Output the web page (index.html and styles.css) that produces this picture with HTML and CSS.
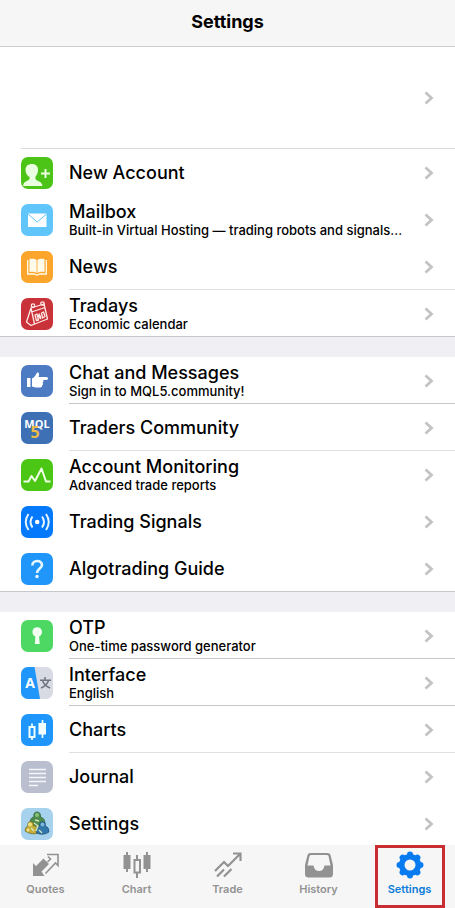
FILE: index.html
```
<!DOCTYPE html>
<html lang="en">
<head>
    <meta charset="UTF-8">
    <meta name="viewport" content="width=device-width, initial-scale=1.0">
    <title>Settings</title>
    <link rel="stylesheet" href="styles.css">
</head>
<body>
    <svg class="defs" width="0" height="0">
        <symbol id="arrow" viewBox="0 0 10 14">
            <path d="M1.5 1.5 L7.5 7 L1.5 12.5" fill="none" stroke="#c3c3c5" stroke-width="2.8"/>
        </symbol>
    </svg>

    <header class="header">
        <h1>Settings</h1>
    </header>

    <main class="content">
        <a class="account" href="#" aria-label="Account">
            <svg class="arrow"><use href="#arrow"/></svg>
        </a>

        <ul class="group">
            <li><a class="row" href="#">
                <svg class="icon" viewBox="0 0 32 32">
                    <rect width="32" height="32" fill="#4cc417"/>
                    <path d="M11 7 C15 7 17 9.500 17 13 C17 16 16 18 14.500 19.500 L14.500 22 C15 24 21 24 21.500 29 L2 29 C2.500 24 7.500 24 8.500 22 L8.500 20 C6 18.500 4.500 16 4.500 13 C4.500 9 7 7 11 7Z" fill="#e9ffe0"/>
                    <path d="M24.500 12 V21 M20 16.500 H29" stroke="#e9ffe0" stroke-width="2"/>
                </svg>
                <span class="text"><span class="title">New Account</span></span>
                <svg class="arrow"><use href="#arrow"/></svg>
            </a></li>
            <li><a class="row" href="#">
                <svg class="icon" viewBox="0 0 32 32">
                    <rect width="32" height="32" fill="#5fc5fa"/>
                    <rect x="7" y="9.500" width="18.500" height="13.500" fill="#fff"/>
                    <path d="M7 10 L16.200 18 L25.500 10" fill="none" stroke="#5fc5fa" stroke-width="1"/>
                </svg>
                <span class="text">
                    <span class="title">Mailbox</span>
                    <span class="sub">Built-in Virtual Hosting — trading robots and signals...</span>
                </span>
                <svg class="arrow"><use href="#arrow"/></svg>
            </a></li>
            <li><a class="row" href="#">
                <svg class="icon" viewBox="0 0 32 32">
                    <rect width="32" height="32" fill="#fca52c"/>
                    <path d="M8.500 8 C11 7.500 14 7.500 15.600 9 V22 C13 20.700 11 20.700 8.500 21Z M23.500 8 C21 7.500 18 7.500 16.400 9 V22 C19 20.700 21 20.700 23.500 21Z" fill="#fffbea"/>
                    <path d="M6.700 9 V23 H13.500 Q16 25 18.500 23 H25.300 V9" fill="none" stroke="#fffbea" stroke-width="1.300"/>
                </svg>
                <span class="text line"><span class="title">News</span></span>
                <svg class="arrow"><use href="#arrow"/></svg>
            </a></li>
            <li><a class="row" href="#">
                <svg class="icon" viewBox="0 0 32 32">
                    <rect width="32" height="32" fill="#c93238"/>
                    <g fill="none" stroke="#ffe9e6" stroke-width="1.300" stroke-linejoin="round">
                        <path d="M10 10 L23 6 L26.500 21 L10 27.500 L5.500 24 L10 10 L13.500 26 M10 10 L5.500 24 M10.500 14 L24 9.500 M10 27.500 L13.500 26"/>
                        <circle cx="12" cy="7.500" r="1.700"/>
                        <circle cx="21.500" cy="5.500" r="1.700"/>
                        <path d="M14 17 L16 16 L17.500 22 L15.500 22.500Z M18 15.500 L19.500 19 L19 21 M22.500 14 L20.500 15 L21.500 20 L24 18.500Z M17 17 L20 21"/>
                    </g>
                </svg>
                <span class="text">
                    <span class="title">Tradays</span>
                    <span class="sub">Economic calendar</span>
                </span>
                <svg class="arrow"><use href="#arrow"/></svg>
            </a></li>
        </ul>

        <ul class="group">
            <li><a class="row" href="#">
                <svg class="icon" viewBox="0 0 32 32">
                    <rect width="32" height="32" fill="#4d7bc3"/>
                    <path d="M6 13 H9.500 V22 H6Z M11 13.500 C13.500 12.500 15 10 16 7.500 C18.500 7 18.500 10 17.500 12 H25.500 C27.500 12 27.500 15 25.500 15 H21.800 C23 15.500 22.500 17.500 21.500 17.700 C22.500 18.500 22 20 21 20.200 C21.500 21.500 20.500 22.500 19 22.500 H14.500 C13 22.500 12.500 21.700 11 21.500Z" fill="#fff"/>
                </svg>
                <span class="text line dark">
                    <span class="title">Chat and Messages</span>
                    <span class="sub">Sign in to MQL5.community!</span>
                </span>
                <svg class="arrow"><use href="#arrow"/></svg>
            </a></li>
            <li><a class="row" href="#">
                <svg class="icon" viewBox="0 0 32 32">
                    <rect width="32" height="32" fill="#3d70b5"/>
                    <text class="mql" x="16" y="16">MQL</text>
                    <text class="five" x="14" y="26">5</text>
                </svg>
                <span class="text line"><span class="title">Traders Community</span></span>
                <svg class="arrow"><use href="#arrow"/></svg>
            </a></li>
            <li><a class="row" href="#">
                <svg class="icon" viewBox="0 0 32 32">
                    <rect width="32" height="32" fill="#4cc614"/>
                    <path d="M2.500 22.500 H7.500 L10.500 17 L14 22 L20.500 9.500 L25 22.500 H29.500" fill="none" stroke="#efffe5" stroke-width="2" stroke-linejoin="round"/>
                </svg>
                <span class="text">
                    <span class="title">Account Monitoring</span>
                    <span class="sub">Advanced trade reports</span>
                </span>
                <svg class="arrow"><use href="#arrow"/></svg>
            </a></li>
            <li><a class="row" href="#">
                <svg class="icon" viewBox="0 0 32 32">
                    <rect width="32" height="32" fill="#0479fb"/>
                    <circle cx="16.200" cy="16" r="2.300" fill="#fff"/>
                    <path d="M11.500 10.500 Q7.500 16 11.500 21.500 M21 10.500 Q25 16 21 21.500 M7.500 8 Q2 16 7.500 24 M25 8 Q30.500 16 25 24" fill="none" stroke="#e6f6ff" stroke-width="2"/>
                </svg>
                <span class="text"><span class="title">Trading Signals</span></span>
                <svg class="arrow"><use href="#arrow"/></svg>
            </a></li>
            <li><a class="row" href="#">
                <svg class="icon" viewBox="0 0 32 32">
                    <rect width="32" height="32" fill="#2196fa"/>
                    <path d="M11.300 12.500 C11.500 6.500 21 6.500 21 12 C21 15.500 16 15.500 16 20" fill="none" stroke="#e6f8ff" stroke-width="2.600"/>
                    <circle cx="16" cy="23.500" r="1.700" fill="#e6f8ff"/>
                </svg>
                <span class="text"><span class="title">Algotrading Guide</span></span>
                <svg class="arrow"><use href="#arrow"/></svg>
            </a></li>
        </ul>

        <ul class="group">
            <li><a class="row" href="#">
                <svg class="icon" viewBox="0 0 32 32">
                    <rect width="32" height="32" fill="#4cd863"/>
                    <circle cx="16.200" cy="12" r="4.800" fill="#f2fff2"/>
                    <path d="M14.500 15 H18 L18.700 24 H13.800Z" fill="#f2fff2"/>
                </svg>
                <span class="text line dark">
                    <span class="title">OTP</span>
                    <span class="sub">One-time password generator</span>
                </span>
                <svg class="arrow"><use href="#arrow"/></svg>
            </a></li>
            <li><a class="row" href="#">
                <svg class="icon" viewBox="0 0 32 32">
                    <rect width="32" height="32" fill="#d8dbe4"/>
                    <path d="M0 0 H13.500 L19 32 H0Z" fill="#2196fa"/>
                    <text class="latin" x="9" y="21">A</text>
                    <path d="M24 10 V13 M19 13.300 H30 M27.500 13.500 Q26 18.500 20 21 M21.500 13.500 Q23 18.500 29 21" fill="none" stroke="#6f7580" stroke-width="1.500"/>
                </svg>
                <span class="text line dark">
                    <span class="title">Interface</span>
                    <span class="sub">English</span>
                </span>
                <svg class="arrow"><use href="#arrow"/></svg>
            </a></li>
            <li><a class="row" href="#">
                <svg class="icon" viewBox="0 0 32 32">
                    <rect width="32" height="32" fill="#1e96fb"/>
                    <path d="M11 9.500 V13 M11 23 V26 M21.500 6 V9 M21.500 20 V24" stroke="#f2ffff" stroke-width="1.700"/>
                    <rect x="8.500" y="13" width="5" height="10" fill="none" stroke="#f2ffff" stroke-width="2"/>
                    <rect x="17.500" y="9" width="7.500" height="11.500" fill="#f2ffff"/>
                </svg>
                <span class="text line"><span class="title">Charts</span></span>
                <svg class="arrow"><use href="#arrow"/></svg>
            </a></li>
            <li><a class="row" href="#">
                <svg class="icon" viewBox="0 0 32 32">
                    <rect width="32" height="32" fill="#b9bfcf"/>
                    <path d="M8 8.500 H25 M8 12.500 H25 M8 16.500 H25 M8 20.500 H25 M8 24.500 H17" stroke="#f4f5f8" stroke-width="1.300"/>
                </svg>
                <span class="text"><span class="title">Journal</span></span>
                <svg class="arrow"><use href="#arrow"/></svg>
            </a></li>
            <li><a class="row" href="#">
                <svg class="icon" viewBox="0 0 32 32">
                    <rect width="32" height="32" fill="#a7d2ee"/>
                    <!-- green figure -->
                    <path d="M9 16 Q9 9 13 9 Q12 4 16 4 Q20 4 19.500 9 Q24 10 24 16 L20 18 H12Z" fill="#4c8b4c" stroke="#2f6238" stroke-width=".7"/>
                    <circle cx="16" cy="7" r="2" fill="#8cc27a"/>
                    <!-- yellow figure -->
                    <path d="M4 23 Q4 19 7 18 Q6 14 9.500 13.500 Q13 13.500 12.500 17.500 Q17 18 17 25 Q11 27.500 4 23Z" fill="#c4ae39" stroke="#66651f" stroke-width=".7"/>
                    <circle cx="9" cy="16.500" r="2" fill="#f0df7c"/>
                    <circle cx="7" cy="22" r="1.500" fill="#efe08a"/>
                    <!-- blue figure -->
                    <path d="M15.500 25 Q14.500 20 18.500 18.500 Q18 14 21.500 13.500 Q25 14 24.500 18 Q28 19 28 24 Q22 28 15.500 25Z" fill="#3177a9" stroke="#1c4c70" stroke-width=".7"/>
                    <circle cx="21.500" cy="16.500" r="2" fill="#79b6d9"/>
                    <path d="M13 15 L17 18 L15 23 M18 22 L21 25 M10 20 L13 23 M14 12 L18 13" fill="none" stroke="#d6e3bf" stroke-width="1.300"/>
                </svg>
                <span class="text"><span class="title">Settings</span></span>
                <svg class="arrow"><use href="#arrow"/></svg>
            </a></li>
        </ul>
    </main>

    <nav class="tabs">
        <a class="tab" href="#">
            <svg viewBox="0 0 32 28">
                <path d="M3 12 L6 15 L13.500 7.500 L19 13 L11.500 20.500 L14.500 25 L3 25Z" fill="#929292"/>
                <path d="M18 5.500 L20.500 8 L17.500 11 M15.500 22.500 L25.500 12 L28 14.500 V3.500 H17" fill="none" stroke="#929292" stroke-width="1.600"/>
            </svg>
            <span>Quotes</span>
        </a>
        <a class="tab" href="#">
            <svg viewBox="0 0 32 28">
                <path d="M6 1 V21 M16 4 V27 M26 1 V21" stroke="#929292" stroke-width="2"/>
                <rect x="2.500" y="4" width="7" height="14" fill="#929292"/>
                <rect x="22.500" y="4" width="7" height="14" fill="#929292"/>
                <rect x="13.500" y="9" width="5.500" height="12.500" fill="#f6f6f6" stroke="#929292" stroke-width="2"/>
            </svg>
            <span>Chart</span>
        </a>
        <a class="tab" href="#">
            <svg viewBox="0 0 32 28">
                <path d="M3 20 L12 11 L16 15 L28 3 M21 2.500 H28.500 V10 M5 25.500 L12 18.500 M12 25.500 L19.500 18" fill="none" stroke="#929292" stroke-width="2.200"/>
            </svg>
            <span>Trade</span>
        </a>
        <a class="tab" href="#">
            <svg viewBox="0 0 32 28">
                <path d="M7.500 2 H24.500 Q27 2 27.500 4 L30 14 V23 Q30 26.500 26.500 26.500 H5.500 Q2 26.500 2 23 V14 L4.500 4 Q5 2 7.500 2Z" fill="#929292"/>
                <path d="M8 4 H24 Q25.300 4 25.600 5.500 L27.500 14.500 H21.500 Q20.500 20 16 20 Q11.500 20 10.500 14.500 H4.500 L6.400 5.500 Q6.700 4 8 4Z" fill="#f6f6f6"/>
            </svg>
            <span>History</span>
        </a>
        <a class="tab active" href="#">
            <svg viewBox="0 0 32 28">
                <circle cx="16" cy="14" r="8.300" fill="none" stroke="#087bf0" stroke-width="5.600"/>
                <g stroke="#087bf0" stroke-width="6" stroke-linecap="round">
                    <path d="M16 3.500 V4 M16 24 V24.500 M5.500 14 H6 M26 14 H26.500 M8.600 6.600 L9 7 M23 21 L23.400 21.400 M23.400 6.600 L23 7 M9 21 L8.600 21.400"/>
                </g>
            </svg>
            <span>Settings</span>
        </a>
    </nav>
</body>
</html>
```
FILE: styles.css
```
*{
    padding: 0px;
    margin: 0px;
    box-sizing: border-box;
    list-style: none;
}
body{
    display: flex;
    flex-direction: column;
    height: 100vh;
    background: #fff;
    color: #000;
    font-family: Inter, "Liberation Sans", sans-serif;
}
a{
    color: inherit;
    text-decoration: none;
}
.defs{
    position: absolute;
}
.header{
    flex: none;
    padding: 10px 0px 12px;
    background: #f6f6f6;
    border-bottom: 1px solid #cfcfcf;
    text-align: center;
}
.header h1{
    font-size: 18px;
    line-height: 24px;
    font-weight: 700;
}
.content{
    flex: 1;
    min-height: 0px;
    overflow-y: auto;
    scrollbar-width: none;
}
.account{
    display: flex;
    align-items: center;
    justify-content: flex-end;
    height: 102px;
    margin-left: 21px;
    padding-right: 21px;
    border-bottom: 1px solid #dcdcde;
}
.group + .group{
    border-top: 20px solid #efeff4;
}
.group:not(:last-child){
    box-shadow: inset 0px -1px #c8c8cb;
}
.row{
    display: flex;
    align-items: center;
    height: 47px;
    padding-left: 21px;
}
.icon{
    flex: none;
    width: 32px;
    height: 32px;
    margin-right: 16px;
    border-radius: 7px;
}
.text{
    display: flex;
    flex: 1;
    flex-direction: column;
    justify-content: center;
    height: 47px;
    min-width: 0px;
    padding-top: 2px;
    border-bottom: 1px solid transparent;
    white-space: nowrap;
}
.title{
    font-size: 18px;
    line-height: 20px;
    font-weight: 500;
}
.sub{
    font-size: 13px;
    line-height: 16px;
    font-weight: 500;
}
.arrow{
    flex: none;
    width: 10px;
    height: 14px;
}
.row .arrow{
    margin-right: 21px;
}
/* separator runs under the arrow up to the screen edge */
.line{
    margin-right: -31px;
    padding-right: 31px;
    border-bottom-color: #e0e0e2;
}
.line.dark{
    border-bottom-color: #c6c6c9;
}
.mql{
    fill: #fff;
    font: 700 11px "Open Sans", sans-serif;
    text-anchor: middle;
}
.five{
    fill: #eebc45;
    font: 700 16px "Open Sans", sans-serif;
    text-anchor: middle;
}
.latin{
    fill: #fff;
    font: 700 14px "Open Sans", sans-serif;
    text-anchor: middle;
}
.tabs{
    display: flex;
    flex: none;
    height: 63px;
    background: #f6f6f6;
}
.tab{
    position: relative;
    display: flex;
    flex: 1;
    flex-direction: column;
    align-items: center;
    padding-top: 6px;
    color: #929292;
    font-size: 11px;
    line-height: 16px;
    font-weight: 600;
}
.tab svg{
    width: 32px;
    height: 28px;
    margin-bottom: 2px;
}
.tab.active{
    color: #087bd8;
}
.tab.active::after{
    content: '';
    position: absolute;
    top: 0px;
    bottom: 0px;
    left: 50%;
    width: 70px;
    margin-left: -35px;
    border: 3px solid #c92c33;
    box-sizing: border-box;
}
```
